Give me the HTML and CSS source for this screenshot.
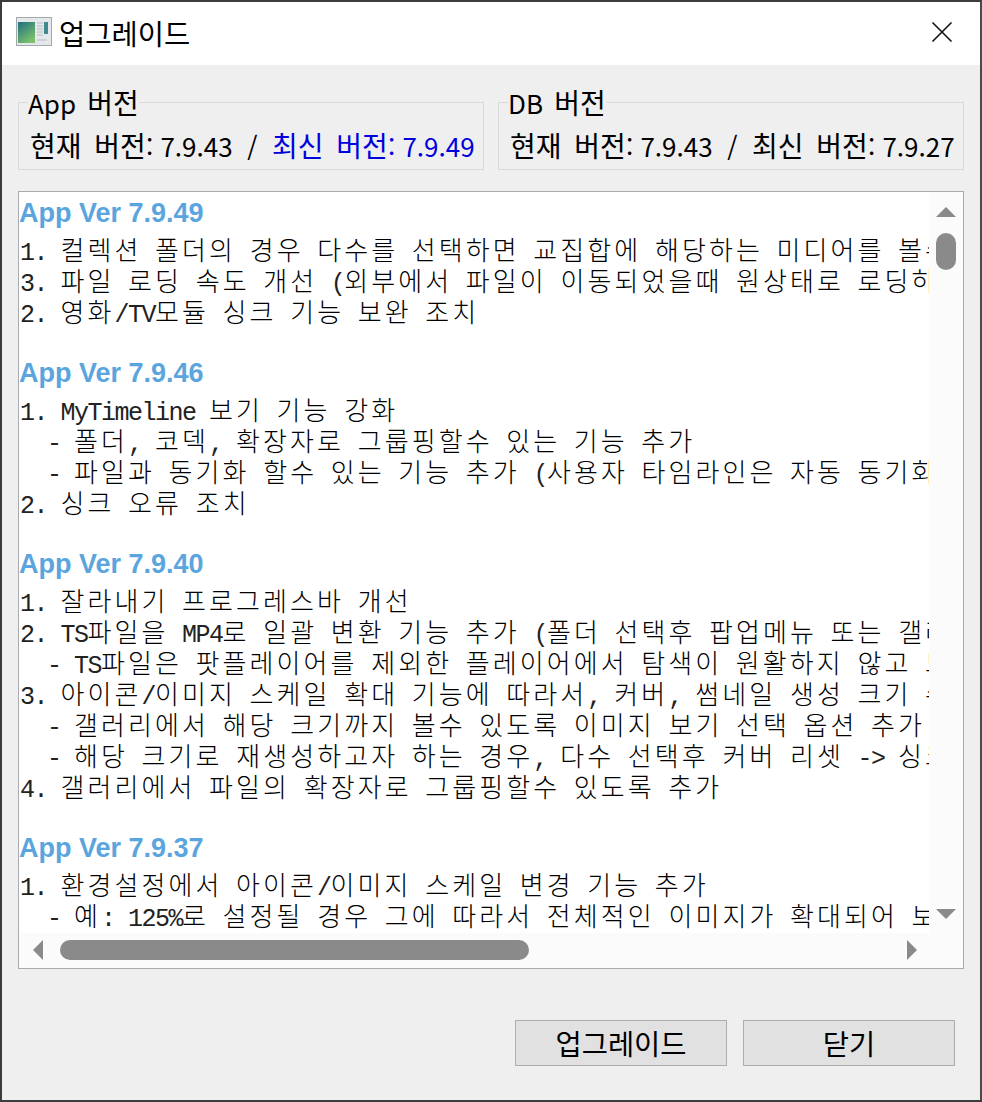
FILE: index.html
```html
<!DOCTYPE html>
<html lang="ko">
<head>
    <meta charset="UTF-8">
    <title>업그레이드</title>
    <link rel="stylesheet" href="styles.css">
</head>
<body>
<div class="dialog">
    <div class="titlebar">
        <svg class="app-icon" width="36" height="30" viewBox="0 0 36 30">
            <defs>
                <linearGradient id="pane" x1="0" y1="0" x2="0.6" y2="1">
                    <stop offset="0" stop-color="#1f6f80"/>
                    <stop offset="1" stop-color="#7cc06c"/>
                </linearGradient>
            </defs>
            <rect x="0.5" y="0.5" width="35" height="28" fill="#e4e8ea" stroke="#a3a8ab"/>
            <rect x="2" y="5" width="17" height="21" fill="url(#pane)"/>
            <rect x="28" y="5" width="4" height="12" fill="#3f8a8c"/>
            <path d="M21 6h6M21 9h6M21 12h6M21 15h6M21 18h6M21 23h10" stroke="#b5bbbd" stroke-width="1.2"/>
        </svg>
        <span class="title">업그레이드</span>
        <svg class="close-icon" width="22" height="22" viewBox="0 0 22 22">
            <path d="M1.5 1.5L20.5 20.5M20.5 1.5L1.5 20.5" stroke="#111" stroke-width="1.6" fill="none"/>
        </svg>
    </div>
    <div class="content">
        <div class="versions">
            <fieldset class="version-box">
                <legend>App <span class="ko">버전</span></legend>
                <div class="version-line"><span class="ko">현재 버전</span>: 7.9.43 &nbsp;/&nbsp; <span class="latest"><span class="ko">최신 버전</span>: 7.9.49</span></div>
            </fieldset>
            <fieldset class="version-box">
                <legend>DB <span class="ko">버전</span></legend>
                <div class="version-line"><span class="ko">현재 버전</span>: 7.9.43 &nbsp;/&nbsp; <span class="ko">최신 버전</span>: 7.9.27</div>
            </fieldset>
        </div>
        <div class="log-box">
            <div class="log-row">
                <div class="log-text">
                    <h3>App Ver 7.9.49</h3>
                    <p><span class="en">1. </span>컬렉션 폴더의 경우 다수를 선택하면 교집합에 해당하는 미디어를 볼수 있도록</p>
                    <p><span class="en">3. </span>파일 로딩 속도 개선 <span class="en">(</span>외부에서 파일이 이동되었을때 원상태로 로딩하도록<span class="en">)</span></p>
                    <p><span class="en">2. </span>영화<span class="en">/TV</span>모듈 싱크 기능 보완 조치</p>
                    <h3>App Ver 7.9.46</h3>
                    <p><span class="en">1. MyTimeline </span>보기 기능 강화</p>
                    <p><span class="en">  - </span>폴더<span class="en">, </span>코덱<span class="en">, </span>확장자로 그룹핑할수 있는 기능 추가</p>
                    <p><span class="en">  - </span>파일과 동기화 할수 있는 기능 추가 <span class="en">(</span>사용자 타임라인은 자동 동기화<span class="en">)</span></p>
                    <p><span class="en">2. </span>싱크 오류 조치</p>
                    <h3>App Ver 7.9.40</h3>
                    <p><span class="en">1. </span>잘라내기 프로그레스바 개선</p>
                    <p><span class="en">2. TS</span>파일을 <span class="en">MP4</span>로 일괄 변환 기능 추가 <span class="en">(</span>폴더 선택후 팝업메뉴 또는 갤러리<span class="en">)</span></p>
                    <p><span class="en">  - TS</span>파일은 팟플레이어를 제외한 플레이어에서 탐색이 원활하지 않고 느림</p>
                    <p><span class="en">3. </span>아이콘<span class="en">/</span>이미지 스케일 확대 기능에 따라서<span class="en">, </span>커버<span class="en">, </span>썸네일 생성 크기 수정</p>
                    <p><span class="en">  - </span>갤러리에서 해당 크기까지 볼수 있도록 이미지 보기 선택 옵션 추가</p>
                    <p><span class="en">  - </span>해당 크기로 재생성하고자 하는 경우<span class="en">, </span>다수 선택후 커버 리셋 <span class="en">-&gt; </span>싱크</p>
                    <p><span class="en">4. </span>갤러리에서 파일의 확장자로 그룹핑할수 있도록 추가</p>
                    <h3>App Ver 7.9.37</h3>
                    <p><span class="en">1. </span>환경설정에서 아이콘<span class="en">/</span>이미지 스케일 변경 기능 추가</p>
                    <p><span class="en">  - </span>예<span class="en">: 125%</span>로 설정될 경우 그에 따라서 전체적인 이미지가 확대되어 보입니다</p>
                </div>
                <div class="vscroll">
                    <span class="arrow-up"></span>
                    <span class="vthumb"></span>
                    <span class="arrow-down"></span>
                </div>
            </div>
            <div class="hscroll">
                <span class="arrow-left"></span>
                <span class="hthumb"></span>
                <span class="arrow-right"></span>
            </div>
        </div>
        <div class="buttons">
            <button>업그레이드</button>
            <button>닫기</button>
        </div>
    </div>
</div>
</body>
</html>
```

FILE: styles.css
```css
html, body {
    margin: 0;
    padding: 0;
    height: 100%;
}
body {
    font-family: "Noto Sans CJK KR", "Liberation Sans", sans-serif;
    color: #000;
    overflow: hidden;
}
.dialog {
    box-sizing: border-box;
    width: 982px;
    height: 1102px;
    border: 2px solid #3c3c3c;
    border-right-color: #4a4a4a;
    display: flex;
    flex-direction: column;
    background-color: #efefef;
}
.titlebar {
    height: 63px;
    box-sizing: border-box;
    padding: 0 27px 3px 14px;
    background-color: #fff;
    display: flex;
    align-items: center;
}
.app-icon {
    margin-right: 7px;
}
.title {
    font-size: 28.5px;
    flex: 1;
}
.content {
    flex: 1;
    padding: 21px 16px 0;
    display: flex;
    flex-direction: column;
}
.versions {
    display: flex;
    gap: 14px;
}
.version-box {
    flex: 1;
    margin: 0;
    padding: 0 0 0 9px;
    height: 84px;
    box-sizing: border-box;
    border: 1px solid #d9d9d9;
    min-width: 0;
}
.version-box legend {
    font-size: 26px;
    line-height: 32px;
    margin-bottom: -6px;
    padding: 0;
    word-spacing: 4px;
}
.version-line {
    font-size: 26px;
    line-height: 36px;
    padding: 14px 0 0 2px;
    white-space: nowrap;
}
.ko {
    font-size: 28px;
    word-spacing: 5px;
}
.latest {
    color: #0000dd;
}
.log-box {
    margin-top: 21px;
    height: 778px;
    box-sizing: border-box;
    border: 1px solid #a9a9b0;
    background-color: #fbfbfb;
    display: flex;
    flex-direction: column;
}
.log-row {
    flex: 1;
    display: flex;
    min-height: 0;
}
.log-text {
    flex: 1;
    min-width: 0;
    overflow: hidden;
    background-color: #fff;
    padding: 6px 0 0 1px;
}
.log-text h3 {
    margin: 32px 0 0 -1px;
    padding-bottom: 5px;
    font-family: "Liberation Sans", sans-serif;
    font-size: 27px;
    line-height: 30px;
    color: #5ba5de;
    font-weight: bold;
}
.log-text h3:first-child {
    margin-top: 0;
}
.log-text p {
    margin: 0;
    font-size: 26px;
    font-weight: 300;
    line-height: 31px;
    white-space: pre;
    letter-spacing: 3.08px;
    word-spacing: 3.2px;
}
.log-text .en {
    font-family: "Liberation Mono", monospace;
    font-size: 25px;
    font-weight: 400;
    line-height: 0;
    color: #222;
    letter-spacing: -1.5px;
    word-spacing: 0;
}
.vscroll {
    width: 34px;
    display: flex;
    flex-direction: column;
    align-items: center;
    position: relative;
}
.vthumb {
    position: absolute;
    top: 41px;
    width: 20px;
    height: 37px;
    border-radius: 10px;
    background-color: #8a8a8a;
}
.arrow-up {
    position: absolute;
    top: 15px;
    border: 10px solid transparent;
    border-top: 0;
    border-bottom-color: #8a8a8a;
}
.arrow-down {
    position: absolute;
    bottom: 14px;
    border: 10px solid transparent;
    border-bottom: 0;
    border-top-color: #8a8a8a;
}
.hscroll {
    height: 35px;
    position: relative;
}
.hthumb {
    position: absolute;
    left: 41px;
    top: 7px;
    width: 469px;
    height: 20px;
    border-radius: 10px;
    background-color: #8a8a8a;
}
.arrow-left {
    position: absolute;
    left: 14px;
    top: 7px;
    border: 10px solid transparent;
    border-left: 0;
    border-right-color: #8a8a8a;
}
.arrow-right {
    position: absolute;
    right: 46px;
    top: 7px;
    border: 10px solid transparent;
    border-right: 0;
    border-left-color: #8a8a8a;
}
.buttons {
    display: flex;
    justify-content: flex-end;
    gap: 16px;
    margin-top: 51px;
    padding-right: 9px;
}
.buttons button {
    width: 212px;
    height: 46px;
    background-color: #e1e1e1;
    border: 1px solid #adadad;
    font-family: inherit;
    font-size: 28.5px;
    line-height: 1;
    padding: 0;
    color: #000;
}
```
